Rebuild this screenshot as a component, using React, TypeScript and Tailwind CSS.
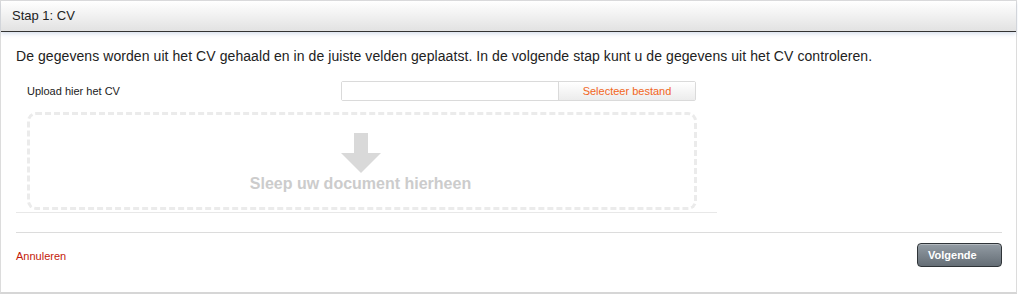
import React from "react";

export default function App() {
  const font = { fontFamily: '"Liberation Sans", Arial, sans-serif' };
  return (
    <div className="w-[1018px] h-[295px] bg-white" style={font}>
      <div className="w-[1017px] h-[294px] border-l border-r border-t border-[#dcdcdc] border-b-2 border-b-[#d6d6d6] flex flex-col">
        <div className="h-[31px] shrink-0 bg-gradient-to-b from-white to-[#e2e2e2] border-b border-[#333333] shadow-[0_2px_4px_rgba(150,170,205,0.35)] flex items-center pl-[11px] text-[13px] text-[#222]">
          Stap 1: CV
        </div>
        <div className="px-[15px] pt-[15px] flex flex-col">
          <p className="text-[14px] tracking-[0.07px] text-[#222] leading-[18px]">
            De gegevens worden uit het CV gehaald en in de juiste velden geplaatst. In de volgende stap kunt u de gegevens uit het CV controleren.
          </p>
          <div className="w-[701px] flex flex-col">
            <div className="flex items-center mt-[16px] h-[20px]">
              <div className="w-[325px] pl-[11px] text-[11px] text-[#222]">Upload hier het CV</div>
              <div className="flex h-[20px] border border-[#dadada] rounded-[2px]">
                <div className="w-[217px] bg-white border-r border-[#dadada]" />
                <div className="w-[136px] bg-gradient-to-b from-white to-[#ececec] text-[11px] text-[#f26522] flex items-center justify-center">
                  Selecteer bestand
                </div>
              </div>
            </div>
            <div className="ml-[11px] mr-[20px] mt-[11px] h-[98px] border-[3px] border-dashed border-[#ebebeb] rounded-[9px] flex flex-col items-center pt-[18px]">
              <svg width="40" height="40" viewBox="0 0 40 40" className="ml-[-3px]">
                <path d="M13 0 H27 V20 H40 L20 40 L0 20 H13 Z" fill="#d9d9d9" />
              </svg>
              <div className="text-[16px] font-bold text-[#cccccc] mt-[1px] ml-[-3px] leading-[20px]">
                Sleep uw document hierheen
              </div>
            </div>
            <div className="mt-[2px] border-t border-[#e8e8e8]" />
          </div>
          <div className="mt-[19px] w-[986px] border-t border-[#dcdcdc]" />
          <div className="w-[986px] flex items-center justify-between mt-[10px]">
            <span className="text-[11px] text-[#c41a0a] mt-[2px]">Annuleren</span>
            <button className="w-[85px] h-[24px] rounded-[4px] border border-[#2f3438] bg-gradient-to-b from-[#939ca4] to-[#656e76] text-white text-[11px] font-bold text-left pl-[10px] shadow-[inset_0_1px_0_rgba(255,255,255,0.3)]">
              Volgende
            </button>
          </div>
        </div>
      </div>
    </div>
  );
}
